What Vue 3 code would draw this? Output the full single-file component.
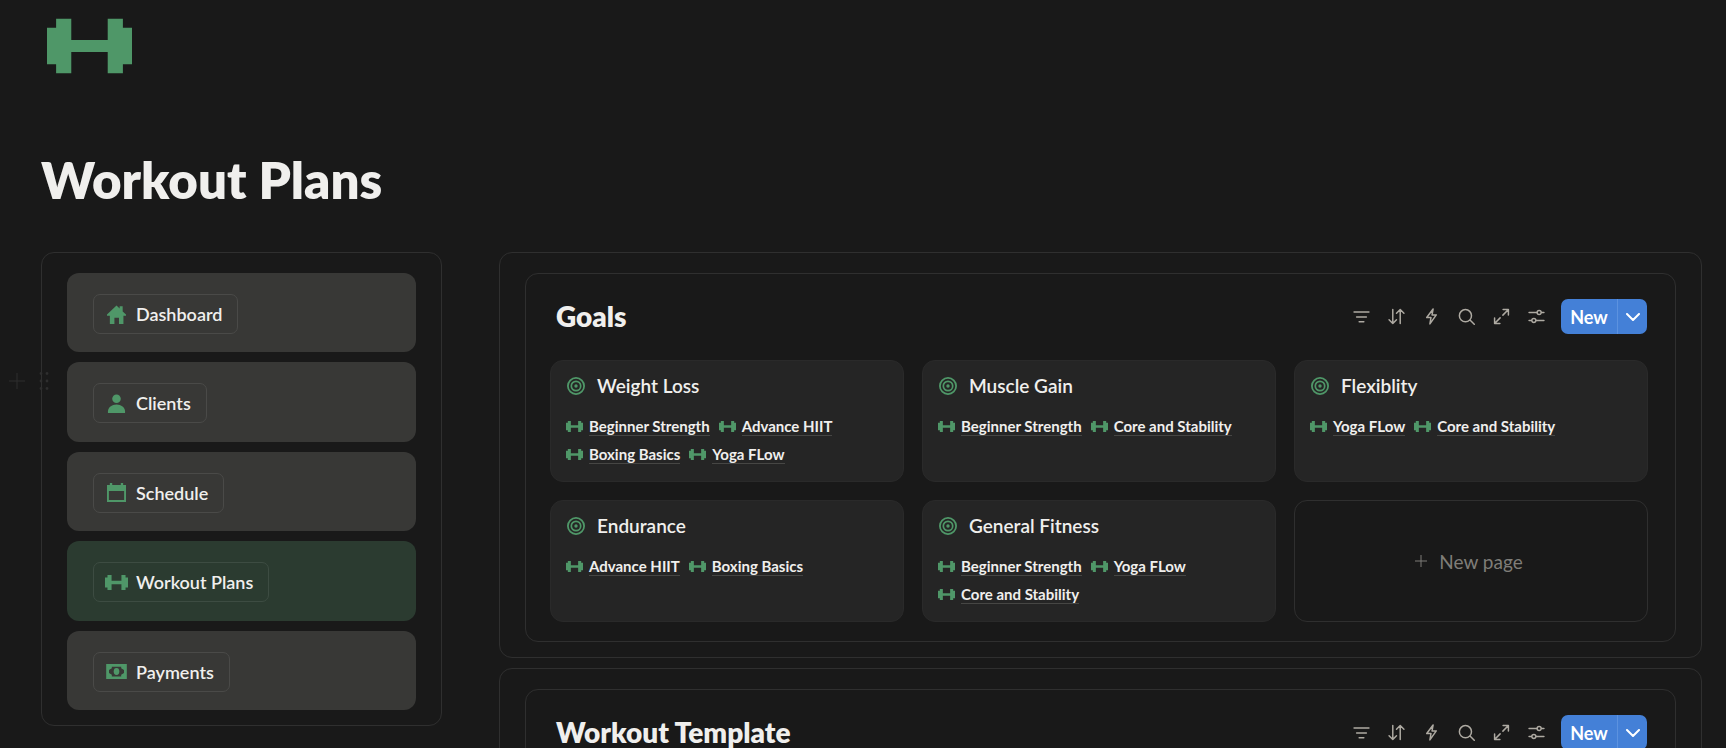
<script setup>
const nav = [
  { label: 'Dashboard', icon: 'home' },
  { label: 'Clients', icon: 'person' },
  { label: 'Schedule', icon: 'calendar' },
  { label: 'Workout Plans', icon: 'dumbbell', active: true },
  { label: 'Payments', icon: 'cash' },
]

const goals = [
  { title: 'Weight Loss', plans: ['Beginner Strength', 'Advance HIIT', 'Boxing Basics', 'Yoga FLow'] },
  { title: 'Muscle Gain', plans: ['Beginner Strength', 'Core and Stability'] },
  { title: 'Flexiblity', plans: ['Yoga FLow', 'Core and Stability'] },
  { title: 'Endurance', plans: ['Advance HIIT', 'Boxing Basics'] },
  { title: 'General Fitness', plans: ['Beginner Strength', 'Yoga FLow', 'Core and Stability'] },
]

const sections = [
  { title: 'Goals', cards: goals },
  { title: 'Workout Template', cards: [] },
]

const tools = [
  { name: 'Filter', d: 'M1 3.8h14M3.4 8.4h9.2M5.8 13h4.4' },
  { name: 'Sort', d: 'M4.5 1.5v13M1 11l3.500 3.500L8 11M11.500 14.500v-13M8 5l3.500-3.500L15 5' },
  { name: 'Automations', d: 'M9.500 1L3.500 9h4L6.500 15l6-8.500h-4z' },
  { name: 'Search', d: 'M12.700 7.200a5.700 5.700 0 1 1-11.400 0a5.700 5.700 0 0 1 11.400 0M11.300 11.300l4 4' },
  { name: 'Expand', d: 'M1.500 14.500l5.200-5.200M9.300 6.700l5.200-5.200M9.500 1.500h5v5M6.500 14.500h-5v-5' },
  { name: 'View settings', d: 'M1 4.300h7.500M12.500 4.300H15M12.400 4.300a1.900 1.900 0 1 1-3.800 0a1.900 1.900 0 0 1 3.800 0M1 11.700h2.500M7.500 11.700H15M7.400 11.700a1.900 1.900 0 1 1-3.800 0a1.900 1.900 0 0 1 3.800 0' },
]
</script>

<template>
  <svg class="defs" aria-hidden="true">
    <symbol id="dumbbell" viewBox="0 0 28 18">
      <path d="M0 3h3V0h5v7h12V0h5v3h3v12h-3v3h-5v-7H8v7H3v-3H0z" />
    </symbol>
    <symbol id="home" viewBox="0 0 20 20">
      <path d="M10 0.500L13.300 3.600V1.200h3.200v5.600L20 10v1.200h-2.700V20h-4.700v-6.500H7.800V20H3v-8.800H0V10z" />
    </symbol>
    <symbol id="person" viewBox="0 0 20 20">
      <circle cx="10" cy="5" r="4.500" />
      <path d="M1 20v-1.500C1 14 5 11 10 11s9 3 9 7.500V20z" />
    </symbol>
    <symbol id="calendar" viewBox="0 0 20 20">
      <path fill-rule="evenodd" d="M0 2h3V0h2.500v2h9V0H17v2h3v18H0zM2 8.500V18h16V8.500z" />
    </symbol>
    <symbol id="cash" viewBox="0 0 22 16">
      <path fill-rule="evenodd" d="M0 0h22v16H0zM6 2.800v1.700L3 6.500v3l3 2v1.700h10v-1.700l3-2v-3l-3-2V2.800z" />
      <ellipse cx="11" cy="8" rx="3" ry="3.700" />
    </symbol>
    <symbol id="target" viewBox="0 0 18 18">
      <circle cx="9" cy="9" r="8.100" fill="none" stroke="currentColor" stroke-width="1.800" />
      <circle cx="9" cy="9" r="4.700" fill="none" stroke="currentColor" stroke-width="1.700" />
      <circle cx="9" cy="9" r="1.700" />
    </symbol>
  </svg>

  <div class="page">
    <header>
      <svg class="cover-icon" aria-hidden="true"><use href="#dumbbell" /></svg>
      <h1>Workout Plans</h1>
    </header>

    <div class="columns">
      <div class="side">
        <div class="handles">
          <button type="button" aria-label="Add block">
            <svg width="16" height="16" viewBox="0 0 16 16"><path d="M8 0v16M0 8h16" stroke="currentColor" /></svg>
          </button>
          <button type="button" aria-label="Drag block">
            <svg width="10" height="18" viewBox="0 0 10 18">
              <circle v-for="n in 6" :key="n" :cx="n % 2 ? 2 : 8" :cy="1.5 + Math.floor((n - 1) / 2) * 7.500" r="1.400" />
            </svg>
          </button>
        </div>
        <nav class="frame">
          <div v-for="item in nav" :key="item.label" class="nav-card" :class="{ active: item.active }">
            <a href="#" class="chip">
              <svg class="nav-icon" :class="item.icon" aria-hidden="true"><use :href="'#' + item.icon" /></svg>
              <span>{{ item.label }}</span>
            </a>
          </div>
        </nav>
      </div>

      <main>
        <section v-for="section in sections" :key="section.title" class="frame outer">
          <div class="frame inner">
            <div class="head">
              <h2>{{ section.title }}</h2>
              <div class="tools">
                <button v-for="t in tools" :key="t.name" type="button" class="tool" :aria-label="t.name">
                  <svg width="17" height="17" viewBox="0 0 16 16"><path :d="t.d" /></svg>
                </button>
              </div>
              <div class="new">
                <button type="button" class="new-main">New</button>
                <button type="button" class="new-more" aria-label="More options">
                  <svg width="14" height="8" viewBox="0 0 14 8"><path d="M1 1l6 6 6-6" /></svg>
                </button>
              </div>
            </div>
            <div class="grid">
              <article v-for="card in section.cards" :key="card.title" class="card">
                <h3>
                  <svg class="target" aria-hidden="true"><use href="#target" /></svg>
                  <span>{{ card.title }}</span>
                </h3>
                <div class="plans">
                  <a v-for="plan in card.plans" :key="plan" href="#">
                    <svg class="plan-icon" aria-hidden="true"><use href="#dumbbell" /></svg>
                    <span>{{ plan }}</span>
                  </a>
                </div>
              </article>
              <button type="button" class="add">
                <svg width="12" height="12" viewBox="0 0 12 12"><path d="M6 0v12M0 6h12" stroke="currentColor" /></svg>
                <span>New page</span>
              </button>
            </div>
          </div>
        </section>
      </main>
    </div>
  </div>
</template>

<style>
html,
body {
  margin: 0;
  background: #191919;
}

body {
  height: 100vh;
  overflow: hidden;
}
</style>

<style scoped>
.page {
  padding: 18px 24px 0 41px;
  font-family: Lato, "Noto Sans", sans-serif;
  color: #f0efed;
}

.defs {
  position: absolute;
  width: 0;
  height: 0;
}

svg {
  flex: none;
  fill: currentColor;
}

button {
  margin: 0;
  padding: 0;
  border: 0;
  background: none;
  font: inherit;
  color: inherit;
  cursor: pointer;
}

a {
  color: inherit;
  text-decoration: none;
}

.cover-icon {
  display: block;
  width: 85px;
  height: 56px;
  margin-left: 6px;
  color: #4f9768;
}

h1 {
  margin: 76px 0 42px;
  font-size: 51px;
  line-height: 60px;
  font-weight: 800;
}

.columns {
  display: grid;
  grid-template-columns: minmax(0, 1fr) minmax(0, 3fr);
  gap: 57px;
  align-items: start;
}

.frame {
  box-sizing: border-box;
  border: 1px solid #2f2f2f;
  border-radius: 13px;
}

.side {
  position: relative;
}

nav {
  display: flex;
  flex-direction: column;
  gap: 10px;
  min-height: 474px;
  padding: 20px 25px 15px;
}

.handles {
  position: absolute;
  top: 120px;
  left: -32px;
  display: flex;
  align-items: center;
  gap: 14px;
  color: #2e2e2e;
}

.handles button,
.tool {
  display: flex;
}

.nav-card {
  flex: 1;
  display: flex;
  align-items: flex-start;
  padding: 21px 26px 0;
  border-radius: 12px;
  background: #383836;
}

.nav-card.active {
  background: #2b3b30;
}

.chip {
  display: flex;
  align-items: center;
  box-sizing: border-box;
  height: 40px;
  padding: 0 15px 0 11px;
  gap: 8px;
  border: 1px solid #4a4a48;
  border-radius: 7px;
  font-size: 18px;
  line-height: 24px;
  font-weight: 600;
}

.active .chip {
  border-color: #3d4c42;
}

.nav-icon {
  width: 23px;
  height: 19px;
  color: #4f9768;
}

.nav-icon.dumbbell,
.nav-icon.cash {
  height: 15px;
}

main {
  display: grid;
  gap: 10px;
}

.outer {
  padding: 20px 25px 15px;
}

.inner {
  padding: 25px 27px 19px 24px;
}

.head {
  display: flex;
  align-items: center;
  height: 35px;
  margin-bottom: 26px;
  padding-left: 6px;
}

h2 {
  flex: 1;
  margin: 0;
  font-size: 28px;
  line-height: 35px;
  font-weight: 800;
}

.tools {
  display: flex;
  gap: 18px;
  margin-right: 16px;
  color: #aeaaa2;
}

.tool path,
.new-more path {
  fill: none;
  stroke: currentColor;
  stroke-width: 1.4;
  stroke-linecap: round;
  stroke-linejoin: round;
}

.new {
  display: flex;
  height: 35px;
  margin-right: 1px;
  border-radius: 7px;
  background: #4480d7;
  color: #fff;
}

.new-main {
  width: 57px;
  border-right: 1px solid #5c92df;
  font-size: 18px;
  font-weight: 700;
}

.new-more {
  display: flex;
  align-items: center;
  justify-content: center;
  width: 29px;
}

.new-more path {
  stroke-width: 2;
}

.grid {
  display: grid;
  grid-template-columns: repeat(3, minmax(0, 1fr));
  gap: 18px;
}

.card,
.add {
  box-sizing: border-box;
  min-height: 122px;
  border-radius: 13px;
}

.card {
  padding: 13px 15px;
  border: 1px solid #2a2a2a;
  background: #252525;
}

h3 {
  display: flex;
  align-items: center;
  gap: 12px;
  margin: 0 0 14px;
  padding-left: 1px;
  font-size: 19px;
  line-height: 24px;
  font-weight: 600;
}

.target {
  width: 18px;
  height: 18px;
  color: #4f9768;
}

.plans {
  display: flex;
  flex-wrap: wrap;
  column-gap: 9px;
}

.plans a {
  display: flex;
  align-items: center;
  gap: 6px;
  height: 28px;
  font-size: 15px;
  line-height: 18px;
  font-weight: 700;
}

.plans span {
  border-bottom: 1px solid #464644;
}

.plan-icon {
  width: 17px;
  height: 11px;
  color: #4f9768;
}

.add {
  display: flex;
  align-items: center;
  justify-content: center;
  gap: 12px;
  padding-right: 4px;
  border: 1px solid #2f2f2f;
  font-size: 19px;
  color: #7f7d78;
}
</style>
